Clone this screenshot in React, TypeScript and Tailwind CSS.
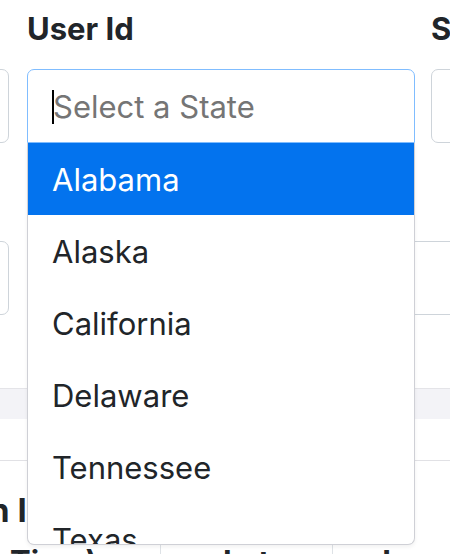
import React from "react";

const states = ["Alabama", "Alaska", "California", "Delaware", "Tennessee", "Texas"];

function Field({ label }: { label?: string }) {
  return (
    <div className="w-[388px] shrink-0">
      <div className="h-[38px] text-[31px] font-bold leading-[38px]">{label}</div>
      <div className="mt-[21px] h-[74px] rounded-[7px] border border-[#ced4da] bg-white" />
    </div>
  );
}

function StateSelect() {
  return (
    <div className="w-[388px] shrink-0">
      <div className="h-[38px] text-[31px] font-bold leading-[38px]">User Id</div>
      <div className="relative mt-[21px]">
        <div className="flex h-[74px] items-center rounded-t-[7px] border border-[#80bdff] bg-white pl-[24px] pt-[2px]">
          <span className="h-[34px] w-[2px] bg-black" />
          <span className="-ml-[1px] text-[31px] text-[#757575]">Select a State</span>
        </div>
        {/* open menu */}
        <div className="absolute left-0 top-full z-10 h-[402px] w-full overflow-hidden rounded-b-[7px] border border-t-0 border-[#cfd0d6] bg-white shadow-[0_2px_4px_rgba(0,0,0,0.06)]">
          {states.map((s, i) => (
            <div
              key={s}
              className={`flex h-[72px] items-center pl-[24px] pt-[2px] text-[31px] ${
                i === 0 ? "bg-[#0373ee] text-white" : "text-[#212529]"
              }`}
            >
              {s}
            </div>
          ))}
        </div>
      </div>
    </div>
  );
}

export default function App() {
  return (
    <div className="relative h-[554px] w-[450px] overflow-hidden bg-white font-['Inter',sans-serif] text-[#212529]">
      {/* first form row */}
      <div className="ml-[-379px] flex gap-[18px] pt-[10px]">
        <Field />
        <StateSelect />
        <div className="ml-[-2px]">
          <Field label="State" />
        </div>
      </div>

      {/* second form row */}
      <div className="ml-[-379px] mt-[98px] flex gap-[18px]">
        <div className="h-[74px] w-[388px] shrink-0 rounded-[7px] border border-[#ced4da]" />
        <div className="h-[74px] w-[800px] shrink-0 rounded-[7px] border border-[#ced4da]" />
      </div>

      {/* band */}
      <div className="mt-[73px] h-[31px] border-t border-[#e4e4e8] bg-[#f3f3f7]" />
      <div className="mt-[41px] border-t border-[#e1e1e5]" />

      {/* section heading */}
      <div className="ml-[-130px] mt-[29px] whitespace-nowrap text-[33px] font-bold leading-[40px]">
        Location Info
      </div>

      {/* table header */}
      <div className="mt-[12px] flex text-[31px] font-bold leading-[40px]">
        <div className="w-[161px] shrink-0 border-r border-[#dee2e6] pl-[10px]">Time)</div>
        <div className="w-[172px] shrink-0 border-r border-[#dee2e6] text-center">Lat</div>
        <div className="w-[174px] shrink-0 text-center">Long</div>
      </div>
    </div>
  );
}
